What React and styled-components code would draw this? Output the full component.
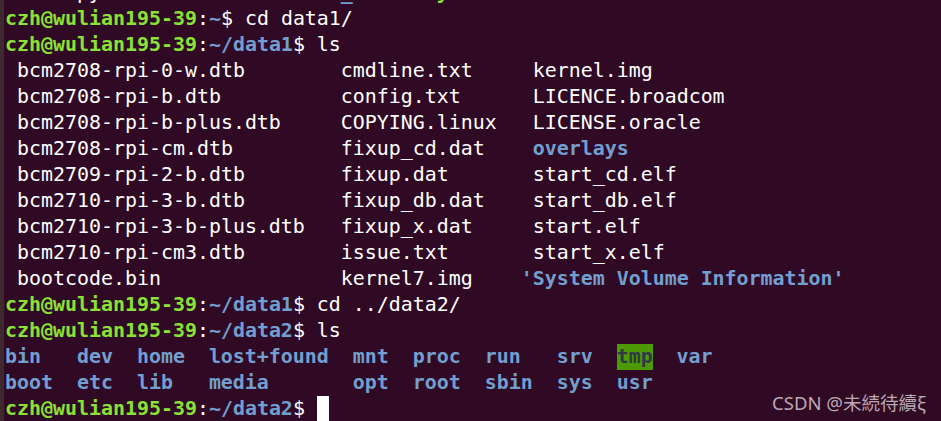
import styled, { createGlobalStyle } from "styled-components";

const GlobalStyle = createGlobalStyle`
    html, body {
        margin: 0;
        padding: 0;
        background: #300a24;
    }
`;

const Terminal = styled.div`
    position: relative;
    width: 941px;
    height: 421px;
    overflow: hidden;
    background: #300a24;
    box-sizing: border-box;
    border-left: 4px solid #3e2a2e;
    font-family: "DejaVu Sans Mono", "Liberation Mono", monospace;
    font-size: 19.93px;
    line-height: 26px;
    color: #ffffff;
`;

const Screen = styled.div`
    margin-top: -20px;
    padding-left: 1px;
`;

const Line = styled.div`
    white-space: pre;
    height: 26px;
`;

const User = styled.span`
    color: #8ae234;
    font-weight: bold;
`;

const Path = styled.span`
    color: #729fcf;
    font-weight: bold;
`;

const Listing = styled.div`
    display: grid;
    grid-template-columns: ${(p) => p.$cols.map((c) => `${c}ch`).join(" ")} auto;
    grid-auto-rows: 26px;
    justify-content: start;
`;

const Entry = styled.span`
    white-space: pre;
    justify-self: start;
    color: ${(p) => (p.$kind === "file" ? "#ffffff" : p.$kind === "sticky" ? "#2e3a44" : "#729fcf")};
    font-weight: ${(p) => (p.$kind === "file" ? "normal" : "bold")};
    background: ${(p) => (p.$kind === "sticky" ? "#4e9a06" : "transparent")};
`;

const Cursor = styled.span`
    display: inline-block;
    width: 12px;
    height: 26px;
    vertical-align: top;
    background: #ffffff;
`;

const Watermark = styled.div`
    position: absolute;
    right: 15px;
    bottom: 7px;
    font-family: "Noto Sans", "Noto Sans CJK SC", sans-serif;
    font-size: 18.5px;
    line-height: 22px;
    color: rgba(225, 215, 222, 0.78);
`;

const data1 = [
	[" bcm2708-rpi-0-w.dtb", " cmdline.txt", " kernel.img"],
	[" bcm2708-rpi-b.dtb", " config.txt", " LICENCE.broadcom"],
	[" bcm2708-rpi-b-plus.dtb", " COPYING.linux", " LICENSE.oracle"],
	[" bcm2708-rpi-cm.dtb", " fixup_cd.dat", [" overlays", "dir"]],
	[" bcm2709-rpi-2-b.dtb", " fixup.dat", " start_cd.elf"],
	[" bcm2710-rpi-3-b.dtb", " fixup_db.dat", " start_db.elf"],
	[" bcm2710-rpi-3-b-plus.dtb", " fixup_x.dat", " start.elf"],
	[" bcm2710-rpi-cm3.dtb", " issue.txt", " start_x.elf"],
	[" bootcode.bin", " kernel7.img", ["'System Volume Information'", "dir"]],
];

const data2 = [
	["bin", "dev", "home", "lost+found", "mnt", "proc", "run", "srv", ["tmp", "sticky"], "var"],
	["boot", "etc", "lib", "media", "opt", "root", "sbin", "sys", "usr"],
];

function Prompt({ path, cmd, children }) {
	return (
		<Line>
			<User>czh@wulian195-39</User>:<Path>{path}</Path>${cmd ? ` ${cmd}` : " "}
			{children}
		</Line>
	);
}

function renderEntry(item, kindDefault, key) {
	const [text, kind] = Array.isArray(item) ? item : [item, kindDefault];
	return (
		<Entry key={key} $kind={kind}>
			{text}
		</Entry>
	);
}

export default function App() {
	return (
		<>
			<GlobalStyle />
			<Terminal>
				<Screen>
					{/* tail of the line scrolled off the top */}
					<Line>
						{"files.py"}
						{"                  "}
						<Path>io_x</Path>
						{"  "}
						<User>ready</User>
					</Line>
					<Prompt path="~" cmd="cd data1/" />
					<Prompt path="~/data1" cmd="ls" />
					<Listing $cols={[27, 16]}>
						{data1.map((row, r) => row.map((item, c) => renderEntry(item, "file", `${r}-${c}`)))}
					</Listing>
					<Prompt path="~/data1" cmd="cd ../data2/" />
					<Prompt path="~/data2" cmd="ls" />
					<Listing $cols={[6, 5, 6, 12, 5, 6, 6, 5, 5]}>
						{data2.map((row, r) => row.map((item, c) => renderEntry(item, "dir", `${r}-${c}`)))}
					</Listing>
					<Prompt path="~/data2">
						<Cursor />
					</Prompt>
				</Screen>
				<Watermark>CSDN @未続待續ξ</Watermark>
			</Terminal>
		</>
	);
}
